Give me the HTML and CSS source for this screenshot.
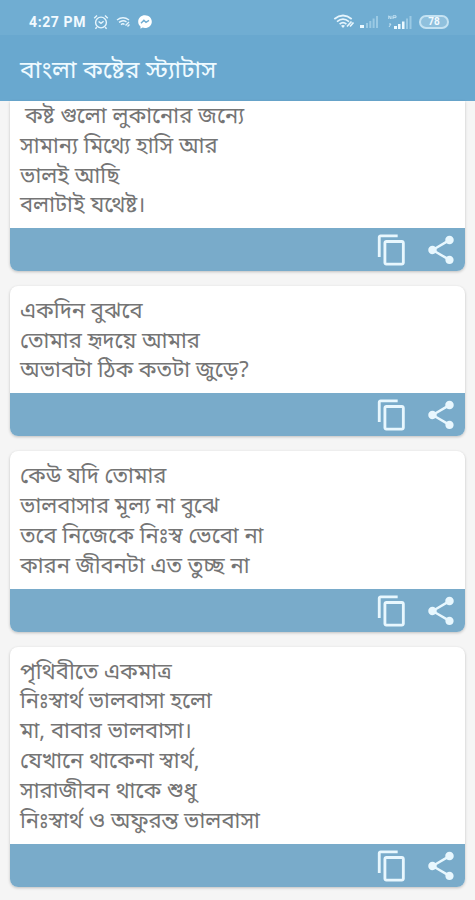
FILE: index.html
```
<!doctype html>
<html lang="bn">
<head>
  <meta charset="utf-8">
  <meta name="viewport" content="width=device-width, initial-scale=1.0">
  <title>বাংলা কষ্টের স্ট্যাটাস</title>
  <link rel="stylesheet" href="styles.css">
</head>
<body>

  <!-- shared icons -->
  <svg class="sprite" width="0" height="0">
    <symbol id="copy" viewBox="0 0 24 24">
      <path d="M16 1H4c-1.1 0-2 .9-2 2v14h2V3h12V1zm3 4H8c-1.1 0-2 .9-2 2v14c0 1.1.9 2 2 2h11c1.1 0 2-.9 2-2V7c0-1.1-.9-2-2-2zm0 16H8V7h11v14z"/>
    </symbol>
    <symbol id="share" viewBox="0 0 24 24">
      <path d="M18 16.08c-.76 0-1.44.3-1.96.77L8.91 12.7c.05-.23.09-.46.09-.7s-.04-.47-.09-.7l7.05-4.11c.54.5 1.25.81 2.04.81 1.66 0 3-1.34 3-3s-1.34-3-3-3-3 1.34-3 3c0 .24.04.47.09.7L8.04 9.81C7.5 9.31 6.79 9 6 9c-1.66 0-3 1.34-3 3s1.34 3 3 3c.79 0 1.5-.31 2.04-.81l7.12 4.16c-.05.21-.08.43-.08.65 0 1.61 1.31 2.92 2.92 2.92s2.92-1.31 2.92-2.92-1.31-2.92-2.92-2.92z"/>
    </symbol>
  </svg>

  <header>
    <div class="status">
      <span class="time">4:27 PM</span>
      <svg class="alarm" width="16" height="16" viewBox="0 0 16 16">
        <circle cx="8" cy="8.5" r="5.4"/>
        <path d="M1.2 4.2L4 1.6M14.8 4.2L12 1.6M5.6 7.5L8 9.3l2.6-2M3.8 13.2l-1.4 1.6M12.2 13.2l1.4 1.6"/>
      </svg>
      <svg class="wifi-small" width="15" height="12" viewBox="0 0 15 12">
        <path d="M1 4Q7 -.5 13 4M3 6.4Q7 3.2 10.5 6M5 8.6Q7 7 8.5 8.4"/>
        <path d="M9.5 9.5l3.5-3.5M11.5 10.5l2-2"/>
      </svg>
      <svg class="messenger" width="14" height="14" viewBox="0 0 14 14">
        <path class="bubble" d="M7 .3C3.2.3.2 3 .2 6.7c0 2 .9 3.6 2.3 4.8v2.2l2.1-1.1c.8.2 1.6.4 2.4.4 3.8 0 6.8-2.7 6.8-6.3S10.8.3 7 .3z"/>
        <path class="bolt" d="M3 8.3l2.9-3 2.1 2 3-1.9"/>
      </svg>

      <div class="signals">
        <svg class="wifi" width="22" height="15" viewBox="0 0 22 15">
          <path d="M1.3 5Q10 -2 18.7 5M4 7.6Q10 2.6 16 7.6M6.6 10.2Q10 7.2 13.4 10.2"/>
          <path class="solid" d="M10 14l-2-2.2q2-1.6 4 0z"/>
          <path class="arrows" d="M14 12.5l4.5-5M17 12.5l3.5-4"/>
        </svg>
        <svg class="bars weak" width="19" height="13" viewBox="0 0 19 13">
          <path class="on" d="M0 10h4v3H0z"/>
          <path d="M6 8h2v5H6zM9.3 6h2v7h-2zM12.6 3.5h2v9.5h-2zM16 1h2v12h-2z"/>
        </svg>
        <svg class="bars" width="24" height="14" viewBox="0 0 24 14">
          <path class="on" d="M6 11h3v3H6zM10 9h2.5v5H10zM14 6.5h2.5v7.5H14z"/>
          <path d="M18 3.5h2v10.5h-2zM21.5 1h2v13h-2z"/>
          <path class="net" d="M.8 4V.8L3 4V.8M5 4V.8h3v1.8H5M1 12l2-3H1"/>
        </svg>
        <span class="battery">78</span>
      </div>
    </div>
    <h1>বাংলা কষ্টের স্ট্যাটাস</h1>
  </header>

  <main>
    <article class="card first">
      <div class="text">
        <p class="indent">কষ্ট গুলো লুকানোর জন্যে</p>
        <p>সামান্য মিথ্যে হাসি আর</p>
        <p>ভালই আছি</p>
        <p>বলাটাই যথেষ্ট।</p>
      </div>
      <div class="actions">
        <svg><use href="#copy"/></svg>
        <svg><use href="#share"/></svg>
      </div>
    </article>

    <article class="card">
      <div class="text">
        <p>একদিন বুঝবে</p>
        <p>তোমার হৃদয়ে আমার</p>
        <p>অভাবটা ঠিক কতটা জুড়ে?</p>
      </div>
      <div class="actions">
        <svg><use href="#copy"/></svg>
        <svg><use href="#share"/></svg>
      </div>
    </article>

    <article class="card">
      <div class="text">
        <p>কেউ যদি তোমার</p>
        <p>ভালবাসার মূল্য না বুঝে</p>
        <p>তবে নিজেকে নিঃস্ব ভেবো না</p>
        <p>কারন জীবনটা এত তুচ্ছ না</p>
      </div>
      <div class="actions">
        <svg><use href="#copy"/></svg>
        <svg><use href="#share"/></svg>
      </div>
    </article>

    <article class="card">
      <div class="text">
        <p>পৃথিবীতে একমাত্র</p>
        <p>নিঃস্বার্থ ভালবাসা হলো</p>
        <p>মা, বাবার ভালবাসা।</p>
        <p>যেখানে থাকেনা স্বার্থ,</p>
        <p>সারাজীবন থাকে শুধু</p>
        <p>নিঃস্বার্থ ও অফুরন্ত ভালবাসা</p>
      </div>
      <div class="actions">
        <svg><use href="#copy"/></svg>
        <svg><use href="#share"/></svg>
      </div>
    </article>
  </main>

</body>
</html>
```
FILE: styles.css
```
* {
  margin: 0;
  padding: 0;
  box-sizing: border-box;
}
body {
  height: 900px;
  overflow: hidden;
  background: #f5f5f5;
  font-family: "Noto Sans Bengali", "Noto Sans", sans-serif;
}
.sprite {
  display: none;
}

/* top bar */
header {
  height: 101px;
  background: #69a8cf;
}
.status {
  display: flex;
  align-items: center;
  height: 35px;
  padding: 8px 26px 0 29px;
  background: #70add2;
  color: #f2faff;
}
.status svg {
  flex: none;
  fill: none;
  stroke: #e6f5fd;
  stroke-width: 1.4;
}
.time {
  width: 64px;
  font: bold 14px/16px Roboto, sans-serif;
  letter-spacing: .6px;
  white-space: nowrap;
}
.wifi-small {
  margin-left: 7px;
}
.messenger {
  margin-left: 7px;
}
.status .bubble {
  fill: #fff;
  stroke: none;
}
.status .bolt {
  stroke: #70add2;
}
.signals {
  display: flex;
  align-items: center;
  margin-left: auto;
}
.status .wifi {
  stroke-width: 1.7;
}
.status .solid {
  fill: #e6f5fd;
  stroke: none;
}
.status .bars {
  margin-left: 9px;
  fill: #9bcae4;
  stroke: none;
}
.status .weak {
  margin-left: 5px;
}
.status .bars .on {
  fill: #ecf9ff;
}
.status .bars .net {
  fill: none;
  stroke: #c4e2f2;
  stroke-width: 1;
}
.battery {
  width: 30px;
  height: 14px;
  margin-left: 7px;
  border: 2px solid #c4e2f2;
  border-radius: 7px;
  background: #8fc0dd;
  font: bold 10px/10px Roboto, sans-serif;
  text-align: center;
}
h1 {
  padding: 6px 0 0 20px;
  color: #eefaff;
  font-size: 24.6px;
  font-weight: 400;
  line-height: 60px;
  height: 66px;
  padding-top: 7px;
  white-space: nowrap;
}

/* list */
main {
  padding: 0 10px;
}
.card {
  margin-bottom: 15px;
  overflow: hidden;
  border-radius: 8px;
  background: #fff;
  box-shadow: 0 1px 3px rgba(0, 0, 0, .22);
}
.first {
  border-radius: 0 0 8px 8px;
}
.text {
  padding: 12px 10px 6.1px;
  color: #757575;
  font-size: 22px;
}
.first .text {
  padding-top: 2px;
  padding-bottom: 5.7px;
}
.text p {
  height: 29.8px;
  line-height: 29.8px;
  white-space: nowrap;
}
.text .indent {
  padding-left: 5px;
}
.actions {
  display: flex;
  justify-content: flex-end;
  align-items: center;
  gap: 15px;
  height: 43px;
  padding: 1px 7px 0 0;
  background: #79abca;
}
.actions svg {
  width: 34px;
  height: 34px;
  fill: #e8f7fe;
}
```
